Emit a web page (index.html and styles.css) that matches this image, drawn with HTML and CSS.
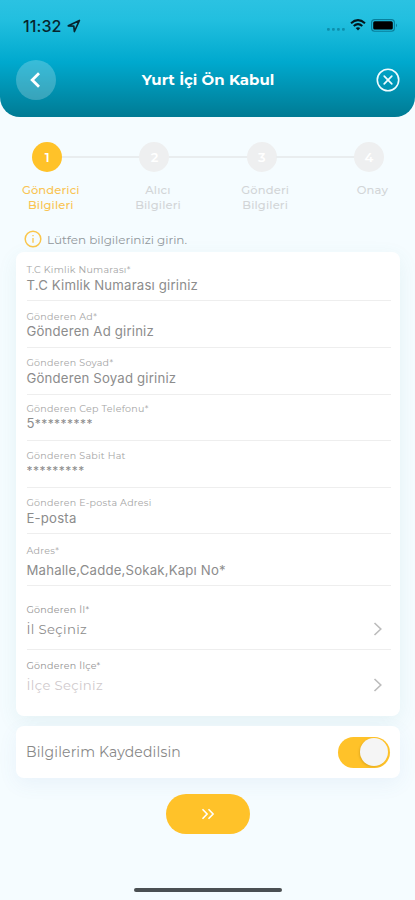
FILE: index.html
```html
<!DOCTYPE html>
<html lang="tr">
<head>
<meta charset="utf-8">
<meta name="viewport" content="width=device-width, initial-scale=1">
<title>Yurt İçi Ön Kabul</title>
<link rel="stylesheet" href="styles.css">
</head>
<body>
<div class="screen">
  <header class="header">
    <div class="status">
      <span class="time">11:32</span>
      <svg class="location" width="14" height="14" viewBox="0 0 14 14"><path d="M1.3 6.8 12.4 1.5 7.4 12.5 6.8 7.2Z" fill="none" stroke="#06242d" stroke-width="1.7" stroke-linejoin="round"/></svg>
      <div class="signals">
        <svg width="19" height="4" viewBox="0 0 19 4" fill="#0d8fac"><rect x="0" y="1" width="2.8" height="2.8" rx="1"/><rect x="5" y="1" width="2.8" height="2.8" rx="1"/><rect x="10" y="1" width="2.8" height="2.8" rx="1"/><rect x="15" y="1" width="2.8" height="2.8" rx="1"/></svg>
        <svg class="wifi" width="16" height="12" viewBox="0 0 16 12" fill="none" stroke="#03171d" stroke-width="2"><path d="M1 4.3Q8-2 15 4.3M3.7 7Q8 3.2 12.3 7"/><path d="M5.7 9.1Q8 7.2 10.3 9.1L8 11.6Z" fill="#03171d" stroke="none"/></svg>
        <svg class="battery" width="27" height="13" viewBox="0 0 27 13"><rect x=".6" y=".6" width="22.8" height="11.6" rx="3" fill="none" stroke="#087f9c" stroke-width="1.1"/><rect x="2.2" y="2.2" width="19.6" height="8.4" rx="1.5" fill="#000"/><path d="M25 4.5Q27 6.4 25 8.3Z" fill="#087f9c"/></svg>
      </div>
    </div>
    <div class="titlebar">
      <div class="back"><svg width="12" height="18" viewBox="0 0 12 18"><path d="M10 2.3 3.2 9l6.8 6.7" fill="none" stroke="#fff" stroke-width="2.8"/></svg></div>
      <h1 class="title">Yurt İçi Ön Kabul</h1>
      <svg class="close" width="24" height="24" viewBox="0 0 24 24" fill="none" stroke="#effcff"><circle cx="12" cy="12" r="10.7" stroke-width="1.6"/><path d="m8.2 8.2 7.6 7.6m0-7.6-7.6 7.6" stroke-width="1.7" stroke-linecap="round"/></svg>
    </div>
  </header>

  <ol class="steps">
    <li class="step active"><span class="dot">1</span><span class="name">Gönderici<br>Bilgileri</span></li>
    <li class="step"><span class="dot">2</span><span class="name">Alıcı<br>Bilgileri</span></li>
    <li class="step"><span class="dot">3</span><span class="name">Gönderi<br>Bilgileri</span></li>
    <li class="step"><span class="dot">4</span><span class="name">Onay</span></li>
  </ol>

  <p class="hint"><svg width="18" height="18" viewBox="0 0 18 18" fill="none" stroke="#fac64b"><circle cx="9" cy="9" r="7.8" stroke-width="1.5"/><path d="M9 8v4.8M9 5v1.3" stroke-width="1.3"/></svg><span>Lütfen bilgilerinizi girin.</span></p>

  <main class="card form">
    <div class="field"><label>T.C Kimlik Numarası*</label><div class="value">T.C Kimlik Numarası giriniz</div></div>
    <div class="field"><label>Gönderen Ad*</label><div class="value">Gönderen Ad giriniz</div></div>
    <div class="field"><label>Gönderen Soyad*</label><div class="value">Gönderen Soyad giriniz</div></div>
    <div class="field"><label>Gönderen Cep Telefonu*</label><div class="value">5<span class="mask">*********</span></div></div>
    <div class="field"><label>Gönderen Sabit Hat</label><div class="value"><span class="mask">*********</span></div></div>
    <div class="field"><label>Gönderen E-posta Adresi</label><div class="value">E-posta</div></div>
    <div class="field address"><label>Adres*</label><div class="value">Mahalle,Cadde,Sokak,Kapı No*</div></div>
    <div class="field select"><label>Gönderen İl*</label><div class="value">İl Seçiniz<svg width="10" height="16" viewBox="0 0 10 16"><path d="m1.5 2 6.3 6-6.3 6" fill="none" stroke="#bcbcbc" stroke-width="1.6"/></svg></div></div>
    <div class="field select district"><label>Gönderen İlçe*</label><div class="value">İlçe Seçiniz<svg width="10" height="16" viewBox="0 0 10 16"><path d="m1.5 2 6.3 6-6.3 6" fill="none" stroke="#bcbcbc" stroke-width="1.6"/></svg></div></div>
  </main>

  <section class="card save"><span>Bilgilerim Kaydedilsin</span><div class="toggle"><i></i></div></section>

  <button class="next" aria-label="İleri"><svg width="14" height="12" viewBox="0 0 14 12" fill="none" stroke="#fff" stroke-width="1.6"><path d="m1.5 1.3 4.6 4.7-4.6 4.7M7.5 1.3l4.6 4.7-4.6 4.7"/></svg></button>
  <div class="home"></div>
</div>
</body>
</html>
```
FILE: styles.css
```css
* { box-sizing: border-box; }
body { margin: 0; font-family: Montserrat, Inter, "Liberation Sans", sans-serif; background: #f5fcff; }
.screen { width: 415px; height: 900px; display: flex; flex-direction: column; overflow: hidden; background: #f5fcff; }
.header { height: 117px; flex: none; border-radius: 0 0 20px 20px; background: linear-gradient(#2bc2e2 0, #22bfdf 20px, #00a9ce 62px, #007b94 117px); }
.status { height: 51px; display: flex; align-items: center; padding: 0 17px 0 23px; }
.time { font: 500 16px/20px Inter, sans-serif; letter-spacing: .1px; color: #06242d; width: 44px; }
.signals { margin-left: auto; display: flex; align-items: center; }
.signals > svg:first-child { margin-top: 7px; }
.wifi { margin: -1px 5px 0 4px; }
.titlebar { height: 58px; display: grid; grid-template-columns: 40px 1fr 40px; align-items: center; padding: 0 15px 0 16px; }
.back { width: 40px; height: 40px; border-radius: 50%; background: rgba(255,255,255,.22); display: grid; place-items: center; }
.back svg { margin-right: 3px; }
.title { margin: 0; text-align: center; font-size: 15px; line-height: 20px; font-weight: 700; color: #fff; }
.close { justify-self: end; }
.steps { list-style: none; margin: 25px -7px 0 -6.3px; padding: 0; display: grid; grid-template-columns: repeat(4, 107.2px); flex: none; height: 86px; }
.step { display: flex; flex-direction: column; align-items: center; color: #d2d5d7; position: relative; }
.step:not(:last-child)::after { content: ""; position: absolute; left: 68px; top: 14px; width: 79px; height: 2px; background: #e9edef; }
.dot { width: 30px; height: 30px; border-radius: 50%; background: #eeeff0; color: #fff; display: grid; place-items: center; font-size: 13px; font-weight: 600; }
.name { margin: 11px 0 0 7px; font-size: 11.5px; line-height: 15px; text-align: center; font-weight: 500; letter-spacing: .15px; }
.active { color: #f9c453; }
.active .dot { background: #ffc229; }
.hint { margin: 0; height: 22px; display: flex; align-items: center; gap: 5px; padding: 0 24px; font-size: 12px; letter-spacing: -.03px; color: #92989c; }
.card { margin: 0 15px 0 16px; background: #fff; border-radius: 8px; flex: none; }
.form { margin-top: 2px; height: 464px; padding: 2.9px 9px 0 10.5px; box-shadow: 0 6px 20px rgba(65,140,140,.09); }
.field { height: 46.6px; border-bottom: 1.2px solid #eee; display: flex; flex-direction: column; justify-content: flex-end; padding-bottom: 6.8px; }
.field label { font-size: 9.5px; line-height: 12px; letter-spacing: .28px; color: #a5a5a5; position: relative; top: .6px; }
.value { font-family: Inter, sans-serif; font-size: 13.2px; line-height: 18px; letter-spacing: .18px; color: #8c8c8c; }
.mask { letter-spacing: .45px; font-size: 12px; }
.address { height: 52px; }
.address label { margin-bottom: 4.5px; }
.select { height: 64px; padding-bottom: 11px; }
.select label { margin-bottom: 5px; color: #929292; }
.select .value { display: flex; justify-content: space-between; align-items: center; font-family: inherit; letter-spacing: .35px; padding-right: 8px; }
.district { height: 65px; border: 0; padding-bottom: 21px; }
.district .value { color: #cfc9cc; }
.save { height: 52px; margin-top: 10px; padding: 0 10px; display: flex; align-items: center; justify-content: space-between; font-size: 14px; letter-spacing: .15px; color: #888; box-shadow: 0 6px 20px rgba(65,120,180,.07); }
.toggle { width: 52px; height: 31px; border-radius: 16px; background: #ffc229; display: flex; align-items: center; justify-content: flex-end; padding: 0 2px; }
.toggle i { width: 28px; height: 28px; border-radius: 50%; background: #f5f5f5; box-shadow: -1px 1px 2px rgba(120,90,0,.2); }
.next { width: 84px; height: 40px; margin: 16px auto 0; border: 0; padding: 0; border-radius: 20px; background: #ffc229; display: grid; place-items: center; flex: none; }
.home { width: 148px; height: 4px; border-radius: 2px; background: #4b5053; margin: 53.5px auto 0; }
```
